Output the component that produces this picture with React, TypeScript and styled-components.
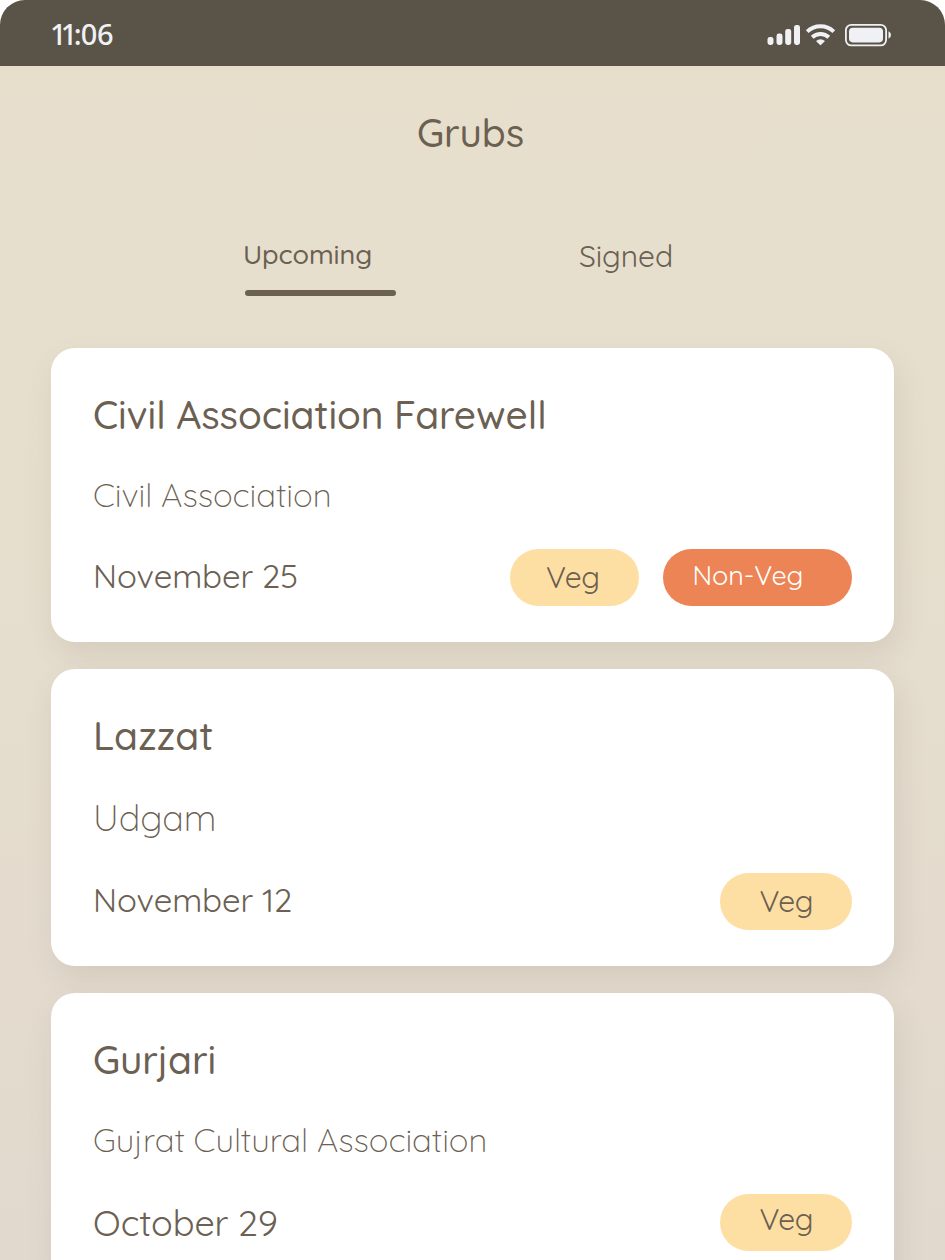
import React from 'react';
import styled, { createGlobalStyle } from 'styled-components';

const ink = '#6b6052';
const light = '#eff1f5';

const GlobalStyle = createGlobalStyle`
  * { box-sizing: border-box; }
  body { margin: 0; background: #fff; }
`;

const Screen = styled.main`
  width: 945px;
  height: 1260px;
  overflow: hidden;
  border-radius: 25px 25px 0 0;
  background: linear-gradient(180deg, #e7dfcc 0%, #e7dfcd 26%, #e2d9ce 100%);
  color: ${ink};
  font-family: Quicksand, Inter, sans-serif;
  letter-spacing: -0.08px;
`;

const StatusBar = styled.header`
  display: flex;
  align-items: center;
  justify-content: space-between;
  height: 66px;
  padding: 0 53px 0 50px;
  background: #5a5347;
  color: ${light};
`;

const Clock = styled.time`
  font: 500 29px/40px 'Noto Sans', sans-serif;
  padding-top: 1px;
`;

const Digit = styled.span<{ $tight: number }>`
  letter-spacing: -${p => p.$tight}px;
`;

const StatusIcons = styled.svg`
  display: block;
  width: 126px;
  height: 26px;
  margin-top: 3px;
`;

const PageTitle = styled.h1`
  margin: 0;
  padding: 42px 4px 0 0;
  font-size: 39px;
  line-height: 49px;
  font-weight: 500;
  text-align: center;
`;

const Tabs = styled.nav`
  display: flex;
  align-items: flex-start;
  gap: 183px;
  padding: 80px 0 0 243px;
  height: 191px;
`;

const Tab = styled.a<{ $active?: boolean }>`
  width: 153px;
  font-size: ${p => (p.$active ? 27 : 30)}px;
  line-height: ${p => (p.$active ? 34 : 38)}px;
  font-weight: ${p => (p.$active ? 460 : 400)};
`;

const Underline = styled.div`
  width: 151px;
  height: 6px;
  margin: 19px 0 0 2px;
  border-radius: 3px;
  background: ${ink};
`;

const CardList = styled.section`
  display: flex;
  flex-direction: column;
  gap: 27px;
  padding: 0 51px;
`;

const Card = styled.article`
  padding: 42px 42px 36px;
  border-radius: 24px;
  background: #fff;
  box-shadow: 4px 12px 28px rgba(107, 96, 82, 0.13);
`;

const EventName = styled.h2`
  margin: 0;
  font-size: 39px;
  line-height: 49px;
  font-weight: 500;
`;

const Host = styled.p<{ $large?: boolean }>`
  margin: 35px 0 0;
  font-size: ${p => (p.$large ? 36 : 33)}px;
  line-height: ${p => (p.$large ? 45 : 41)}px;
  font-weight: 300;
`;

const Footer = styled.div<{ $top: number }>`
  display: flex;
  align-items: flex-start;
  gap: 24px;
  margin-top: ${p => p.$top}px;
`;

const EventDate = styled.span<{ $large?: boolean }>`
  flex: 1;
  padding-top: 6px;
  font-size: ${p => (p.$large ? 36 : 33)}px;
  line-height: ${p => (p.$large ? 45 : 41)}px;
  font-weight: 400;
  letter-spacing: -0.14px;
`;

const VegPill = styled.span<{ $width?: number; $top?: number }>`
  width: ${p => p.$width ?? 132}px;
  height: 57px;
  padding: ${p => p.$top ?? 9}px 0 0 ${p => (p.$width ? 36 : 39.5)}px;
  border-radius: 29px;
  background: #fedfa3;
  font-size: 30px;
  line-height: 38px;
  font-weight: 380;
  letter-spacing: -0.4px;
`;

const NonVegPill = styled.span`
  width: 189px;
  height: 57px;
  padding: 9px 0 0 29.5px;
  border-radius: 29px;
  background: #ed8456;
  color: #fff;
  font-size: 27px;
  line-height: 34px;
  font-weight: 430;
  letter-spacing: -0.1px;
`;

export default function App() {
  return (
    <>
      <GlobalStyle />
      <Screen>
        <StatusBar>
          <Clock>
            <Digit $tight={5.9}>1</Digit>
            <Digit $tight={3.5}>1</Digit>
            <Digit $tight={0.9}>:</Digit>
            <Digit $tight={0.3}>06</Digit>
          </Clock>
          <StatusIcons viewBox="0 0 126 26" fill={light}>
            <rect x="1.5" y="15" width="6" height="8" rx="2.4" />
            <rect x="10.5" y="11.5" width="6" height="11.5" rx="2.4" />
            <rect x="19.2" y="7" width="6" height="16" rx="2.4" />
            <rect x="28" y="3" width="6" height="20" rx="2.4" />
            <g fill="none" stroke={light} strokeWidth="4">
              <path d="M41.2 9.6 A19.4 19.4 0 0 1 67.8 9.6" />
              <path d="M46.2 15.3 A12 12 0 0 1 62.8 15.3" />
            </g>
            <path d="M50 19 Q54.5 15.4 59 19 L55.2 22.8 Q54.5 23.5 53.8 22.8 Z" />
            <rect x="79.9" y="2.8" width="40.2" height="20.6" rx="5.4" fill="none" stroke={light} strokeWidth="1.8" />
            <rect x="83" y="5.8" width="34" height="14.6" rx="3.8" />
            <path d="M122.5 9.3 Q125 10.4 125 13 Q125 15.6 122.5 16.7 Z" />
          </StatusIcons>
        </StatusBar>
        <PageTitle>Grubs</PageTitle>
        <Tabs>
          <Tab $active>
            Upcoming
            <Underline />
          </Tab>
          <Tab>Signed</Tab>
        </Tabs>
        <CardList>
          <Card>
            <EventName>Civil Association Farewell</EventName>
            <Host>Civil Association</Host>
            <Footer $top={34}>
              <EventDate>November 25</EventDate>
              <VegPill $width={129}>Veg</VegPill>
              <NonVegPill>Non-Veg</NonVegPill>
            </Footer>
          </Card>
          <Card>
            <EventName>Lazzat</EventName>
            <Host $large>Udgam</Host>
            <Footer $top={33}>
              <EventDate>November 12</EventDate>
              <VegPill>Veg</VegPill>
            </Footer>
          </Card>
          <Card>
            <EventName>Gurjari</EventName>
            <Host>Gujrat Cultural Association</Host>
            <Footer $top={34}>
              <EventDate $large>October 29</EventDate>
              <VegPill $top={6}>Veg</VegPill>
            </Footer>
          </Card>
        </CardList>
      </Screen>
    </>
  );
}
